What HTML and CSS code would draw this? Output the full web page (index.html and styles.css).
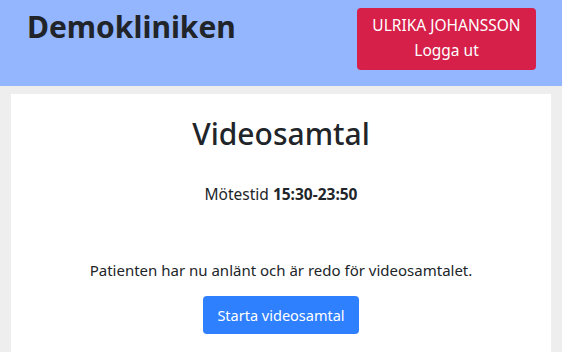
FILE: index.html
```html
<!DOCTYPE html>
<html lang="sv">
<head>
<meta charset="utf-8">
<link rel="stylesheet" href="styles.css">
</head>
<body>
<header class="topbar">
  <h1 class="brand">Demokliniken</h1>
  <button class="logout">
    <span class="user">ULRIKA JOHANSSON</span>
    <span>Logga ut</span>
  </button>
</header>
<main class="card">
  <h2 class="title">Videosamtal</h2>
  <p class="time">Mötestid <strong>15:30-23:50</strong></p>
  <p class="info">Patienten har nu anlänt och är redo för videosamtalet.</p>
  <button class="start">Starta videosamtal</button>
</main>
</body>
</html>
```

FILE: styles.css
```css
* { box-sizing: border-box; }
html, body { margin: 0; padding: 0; }
body {
  background: #eeeeee;
  font-family: "Noto Sans", "Open Sans", sans-serif;
  color: #212529;
  height: 352px;
  overflow: hidden;
}
.topbar {
  background: #94b6ff;
  height: 86px;
  display: flex;
  justify-content: space-between;
  align-items: flex-start;
  padding: 8px 26px 0 27px;
}
.brand {
  margin: 4px 0 0 0;
  font-size: 30px;
  font-weight: 700;
  line-height: 30px;
}
.logout {
  background: #d6204a;
  color: #fff;
  border: none;
  border-radius: 4px;
  width: 179px;
  height: 62px;
  font-family: inherit;
  font-size: 15.5px;
  line-height: 25px;
  display: flex;
  flex-direction: column;
  align-items: center;
  justify-content: center;
  padding: 0 0 2px 0;
}
.card {
  background: #fff;
  width: 540px;
  margin: 8px auto 0;
  height: 258px;
  display: flex;
  flex-direction: column;
  align-items: center;
  padding-top: 18px;
}
.title {
  margin: 0;
  font-size: 30px;
  font-weight: 500;
  line-height: 44px;
}
.time {
  margin: 27px 0 0 0;
  font-size: 15.5px;
  line-height: 22px;
}
.info {
  margin: 53px 0 0 0;
  font-size: 15px;
  line-height: 24px;
}
.start {
  margin-top: 14px;
  background: #2f80ff;
  color: #fff;
  border: none;
  border-radius: 4px;
  width: 156px;
  height: 38px;
  font-family: inherit;
  font-size: 14.5px;
  padding: 0;
}
```
